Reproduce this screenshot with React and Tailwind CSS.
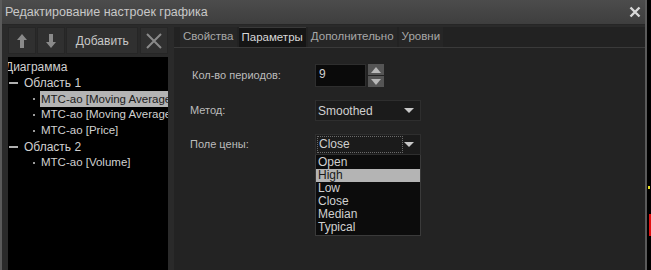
import React from "react";

const font = { fontFamily: '"Liberation Sans", Arial, sans-serif' };

function Arrow({ dir }) {
  return (
    <svg width="12" height="16" viewBox="0 0 12 16">
      {dir === "up" ? (
        <path d="M6 1 L11 7 H8 V15 H4 V7 H1 Z" fill="#8a8a8a" />
      ) : (
        <path d="M6 15 L11 9 H8 V1 H4 V9 H1 Z" fill="#8a8a8a" />
      )}
    </svg>
  );
}

function TreeRow({ level, label, selected }) {
  return (
    <div className="flex items-center h-[16px] whitespace-nowrap text-[11.5px]">
      {level === 0 && <span className="ml-[-3px] text-[#d0d0d0] text-[12px]">{label}</span>}
      {level === 1 && (
        <>
          <span className="shrink-0 w-[9px] h-[2px] bg-[#b0b0b0] ml-[1px] mr-[6px]" />
          <span className="text-[#d0d0d0] text-[12px]">{label}</span>
        </>
      )}
      {level === 2 && (
        <>
          <span className="shrink-0 w-[2px] h-[2px] bg-[#9a9a9a] ml-[25px] mr-[5px]" />
          <span
            className={
              selected
                ? "shrink-0 bg-[#b4b4b4] text-[#202020] pl-[1px] pr-[4px] flex-1 h-[16px] leading-[16px]"
                : "shrink-0 text-[#d0d0d0] pl-[1px]"
            }
          >
            {label}
          </span>
        </>
      )}
    </div>
  );
}

export default function App() {
  const tree = [
    { level: 0, label: "Диаграмма" },
    { level: 1, label: "Область 1" },
    { level: 2, label: "MTC-ao [Moving Average]", selected: true },
    { level: 2, label: "MTC-ao [Moving Average]" },
    { level: 2, label: "MTC-ao [Price]" },
    { level: 1, label: "Область 2" },
    { level: 2, label: "MTC-ao [Volume]" },
  ];
  const tabs = ["Свойства", "Параметры", "Дополнительно", "Уровни"];
  const options = ["Open", "High", "Low", "Close", "Median", "Typical"];

  return (
    <div className="w-[651px] h-[270px] bg-black flex overflow-hidden text-[12px]" style={font}>
      {/* window */}
      <div className="w-[647px] h-[270px] flex flex-col border-l-2 border-r-2 border-[#5a5a5a] bg-[#2a2a2a]">
        {/* title bar */}
        <div className="h-[25px] flex items-center justify-between bg-gradient-to-b from-[#4c4c4c] to-[#3e3e3e] pl-[3px] pr-[4px] border-b border-[#262626]">
          <span className="text-[12.5px] text-[#c8c8c8]">Редактирование настроек графика</span>
          <svg width="12" height="12" viewBox="0 0 12 12">
            <path d="M1.5 1.5 L10.5 10.5 M10.5 1.5 L1.5 10.5" stroke="#d8d8d8" strokeWidth="2.4" />
          </svg>
        </div>

        {/* body */}
        <div className="flex-1 flex pt-[2px] min-h-0">
          {/* left column */}
          <div className="w-[160px] ml-[6px] flex flex-col">
            <div className="h-[27px] flex gap-[1px]">
              <button className="w-[28px] h-[27px] bg-[#303030] border border-[#262626] flex items-center justify-center">
                <Arrow dir="up" />
              </button>
              <button className="w-[29px] h-[27px] bg-[#303030] border border-[#262626] flex items-center justify-center">
                <Arrow dir="down" />
              </button>
              <button className="w-[73px] h-[27px] bg-[#303030] border border-[#262626] text-[#c8c8c8] text-[12px]">
                Добавить
              </button>
              <button className="ml-[1px] w-[28px] h-[27px] bg-[#303030] border border-[#262626] flex items-center justify-center">
                <svg width="18" height="18" viewBox="0 0 18 18">
                  <path d="M2 2 L16 16 M16 2 L2 16" stroke="#8a8a8a" strokeWidth="2" />
                </svg>
              </button>
            </div>
            <div className="mt-[3px] flex-1 bg-black overflow-hidden pt-[2px]">
              {tree.map((r, i) => (
                <TreeRow key={i} {...r} />
              ))}
            </div>
          </div>

          {/* right column */}
          <div className="flex-1 ml-[6px] flex flex-col">
            <div className="h-[21px] flex items-end bg-[#222222] border-b border-[#3a3a3a] pl-[6px] gap-[2px] text-[11.5px]">
              {tabs.map((t, i) => (
                <div
                  key={t}
                  className={
                    i === 1
                      ? "h-[20px] px-[3px] flex items-center bg-[#151515] border-t border-[#3a3a3a] text-[#d8d8d8]"
                      : "h-[20px] px-[3px] flex items-center bg-[#262626] text-[#a8a8a8]"
                  }
                >
                  {t}
                </div>
              ))}
            </div>
            <div className="flex-1 bg-[#232323] pl-[16px] pt-[16px] text-[#bcbcbc] text-[11px]">
              {/* periods */}
              <div className="flex items-center h-[23px]">
                <span className="w-[125px] pl-[2px]">Кол-во периодов:</span>
                <div className="w-[51px] h-[23px] bg-[#0a0a0a] border border-[#2e2e2e] pl-[3px] text-[#d0d0d0] text-[12px] leading-[18px]">9</div>
                <div className="ml-[2px] flex flex-col gap-[1px]">
                  <div className="w-[16px] h-[11px] bg-[#555555] flex items-center justify-center">
                    <svg width="10" height="6" viewBox="0 0 10 6"><path d="M5 0 L10 6 H0 Z" fill="#b8b8b8" /></svg>
                  </div>
                  <div className="w-[16px] h-[11px] bg-[#555555] flex items-center justify-center">
                    <svg width="10" height="6" viewBox="0 0 10 6"><path d="M5 6 L10 0 H0 Z" fill="#b8b8b8" /></svg>
                  </div>
                </div>
              </div>

              {/* method */}
              <div className="flex items-center h-[21px] mt-[13px]">
                <span className="w-[125px]">Метод:</span>
                <div className="w-[106px] h-[21px] bg-[#1b1b1b] border border-[#2e2e2e] flex items-center justify-between pl-[2px] pr-[6px] text-[#d0d0d0] text-[12px]">
                  <span>Smoothed</span>
                  <svg width="10" height="5" viewBox="0 0 10 5"><path d="M0 0 H10 L5 5 Z" fill="#c8c8c8" /></svg>
                </div>
              </div>

              {/* price field */}
              <div className="flex items-start mt-[13px]">
                <span className="w-[125px] h-[21px] leading-[21px]">Поле цены:</span>
                <div className="w-[106px] flex flex-col text-[12px]">
                  <div className="h-[21px] bg-[#1b1b1b] border border-[#2e2e2e] flex items-center justify-between pr-[6px] text-[#d0d0d0]">
                    <span className="w-[86px] h-[17px] ml-[1px] border border-dotted border-[#6a6a6a] pl-[1px] leading-[15px]">Close</span>
                    <svg width="10" height="5" viewBox="0 0 10 5"><path d="M0 0 H10 L5 5 Z" fill="#c8c8c8" /></svg>
                  </div>
                  <div className="bg-[#0c0c0c] border border-[#3a3a3a] border-t-0 pt-[1px] pb-[1px]">
                    {options.map((o) => (
                      <div
                        key={o}
                        className={
                          o === "High"
                            ? "h-[13px] leading-[13px] pl-[2px] bg-[#b4b4b4] text-[#1a1a1a]"
                            : "h-[13px] leading-[13px] pl-[2px] text-[#d0d0d0]"
                        }
                      >
                        {o}
                      </div>
                    ))}
                  </div>
                </div>
              </div>
            </div>
          </div>
        </div>
      </div>

      {/* chart strip behind the window */}
      <div className="flex-1 bg-black flex flex-col relative">
        <div className="absolute left-[1px] top-[186px] w-[2px] h-[3px] bg-[#e8e020]" />
        <div className="absolute left-[2px] top-[214px] w-[2px] h-[22px] bg-[#e01010]" />
      </div>
    </div>
  );
}
